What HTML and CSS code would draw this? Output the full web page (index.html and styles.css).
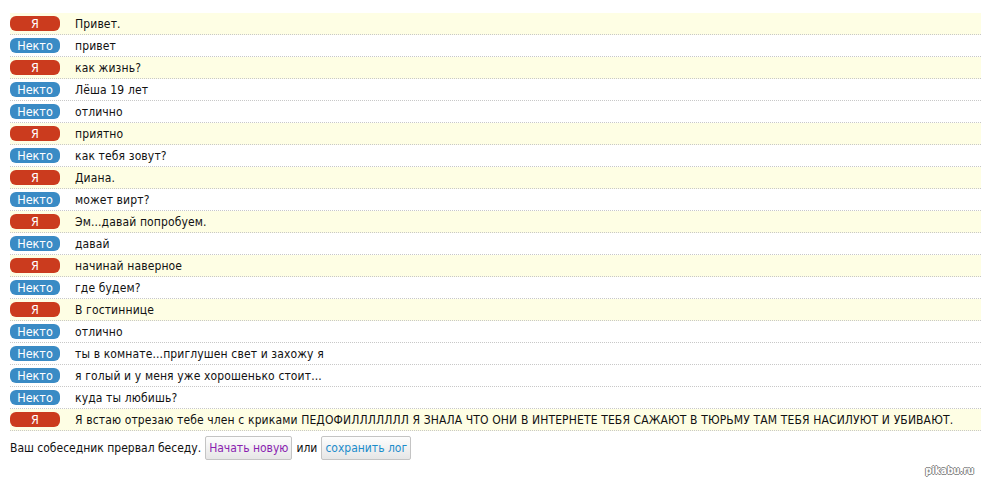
FILE: index.html
```html
<!DOCTYPE html>
<html lang="ru">
<head>
<meta charset="utf-8">
<link rel="stylesheet" href="styles.css">
</head>
<body>
<div class="log">
  <div class="row me"><span class="badge">Я</span><span class="msg">Привет.</span></div>
  <div class="row other"><span class="badge">Некто</span><span class="msg">привет</span></div>
  <div class="row me"><span class="badge">Я</span><span class="msg">как жизнь?</span></div>
  <div class="row other"><span class="badge">Некто</span><span class="msg">Лёша 19 лет</span></div>
  <div class="row other"><span class="badge">Некто</span><span class="msg">отлично</span></div>
  <div class="row me"><span class="badge">Я</span><span class="msg">приятно</span></div>
  <div class="row other"><span class="badge">Некто</span><span class="msg">как тебя зовут?</span></div>
  <div class="row me"><span class="badge">Я</span><span class="msg">Диана.</span></div>
  <div class="row other"><span class="badge">Некто</span><span class="msg">может вирт?</span></div>
  <div class="row me"><span class="badge">Я</span><span class="msg">Эм...давай попробуем.</span></div>
  <div class="row other"><span class="badge">Некто</span><span class="msg">давай</span></div>
  <div class="row me"><span class="badge">Я</span><span class="msg">начинай наверное</span></div>
  <div class="row other"><span class="badge">Некто</span><span class="msg">где будем?</span></div>
  <div class="row me"><span class="badge">Я</span><span class="msg">В гостиннице</span></div>
  <div class="row other"><span class="badge">Некто</span><span class="msg">отлично</span></div>
  <div class="row other"><span class="badge">Некто</span><span class="msg">ты в комнате...приглушен свет и захожу я</span></div>
  <div class="row other"><span class="badge">Некто</span><span class="msg">я голый и у меня уже хорошенько стоит...</span></div>
  <div class="row other"><span class="badge">Некто</span><span class="msg">куда ты любишь?</span></div>
  <div class="row me"><span class="badge">Я</span><span class="msg">Я встаю отрезаю тебе член с криками ПЕДОФИЛЛЛЛЛЛЛ Я ЗНАЛА ЧТО ОНИ В ИНТЕРНЕТЕ ТЕБЯ САЖАЮТ В ТЮРЬМУ ТАМ ТЕБЯ НАСИЛУЮТ И УБИВАЮТ.</span></div>
</div>
<div class="status">
  <span>Ваш собеседник прервал беседу.</span>
  <button class="btn btn-new">Начать новую</button>
  <span>или</span>
  <button class="btn btn-save">сохранить лог</button>
</div>
<div class="watermark">pikabu.ru</div>
</body>
</html>
```
FILE: styles.css
```css
html, body {
  margin: 0;
  padding: 0;
  background: #fff;
}
body {
  font-family: "DejaVu Sans Condensed", "DejaVu Sans", sans-serif;
  font-stretch: condensed;
  font-size: 12px;
  color: #111;
  width: 981px;
  height: 482px;
  position: relative;
  overflow: hidden;
}
.log {
  padding-top: 13px;
  margin-left: 10px;
}
.row {
  display: flex;
  align-items: center;
  height: 21px;
  border-bottom: 1px dotted #c8c8c8;
}
.row.me {
  background: #fefee4;
}
.badge {
  flex: none;
  width: 50px;
  height: 15px;
  line-height: 15px;
  border-radius: 6px;
  color: #fff;
  text-align: center;
  font-size: 12.5px;
}
.me .badge {
  background: #cb3b1e;
}
.other .badge {
  background: #3a8bc5;
}
.msg {
  margin-left: 15px;
  white-space: nowrap;
  letter-spacing: 0.13px;
}
.status {
  display: flex;
  align-items: center;
  margin: 5px 0 0 10px;
  height: 24px;
}
.btn {
  font-family: inherit;
  font-stretch: condensed;
  font-size: 12px;
  height: 24px;
  padding: 0 3px;
  border: 1px solid #c4c4c4;
  border-radius: 2px;
  background: linear-gradient(#fdfdfd, #e6e6e6);
  margin: 0 4px;
}
.btn-new {
  color: #8a1fb0;
}
.btn-save {
  color: #1c8ccb;
}
.watermark {
  position: absolute;
  right: 7px;
  bottom: 6px;
  font-family: "DejaVu Sans", sans-serif;
  font-size: 10px;
  font-weight: bold;
  color: #fff;
  text-shadow: -1px 0 #888, 1px 0 #888, 0 -1px #888, 0 1px #888;
}
```
